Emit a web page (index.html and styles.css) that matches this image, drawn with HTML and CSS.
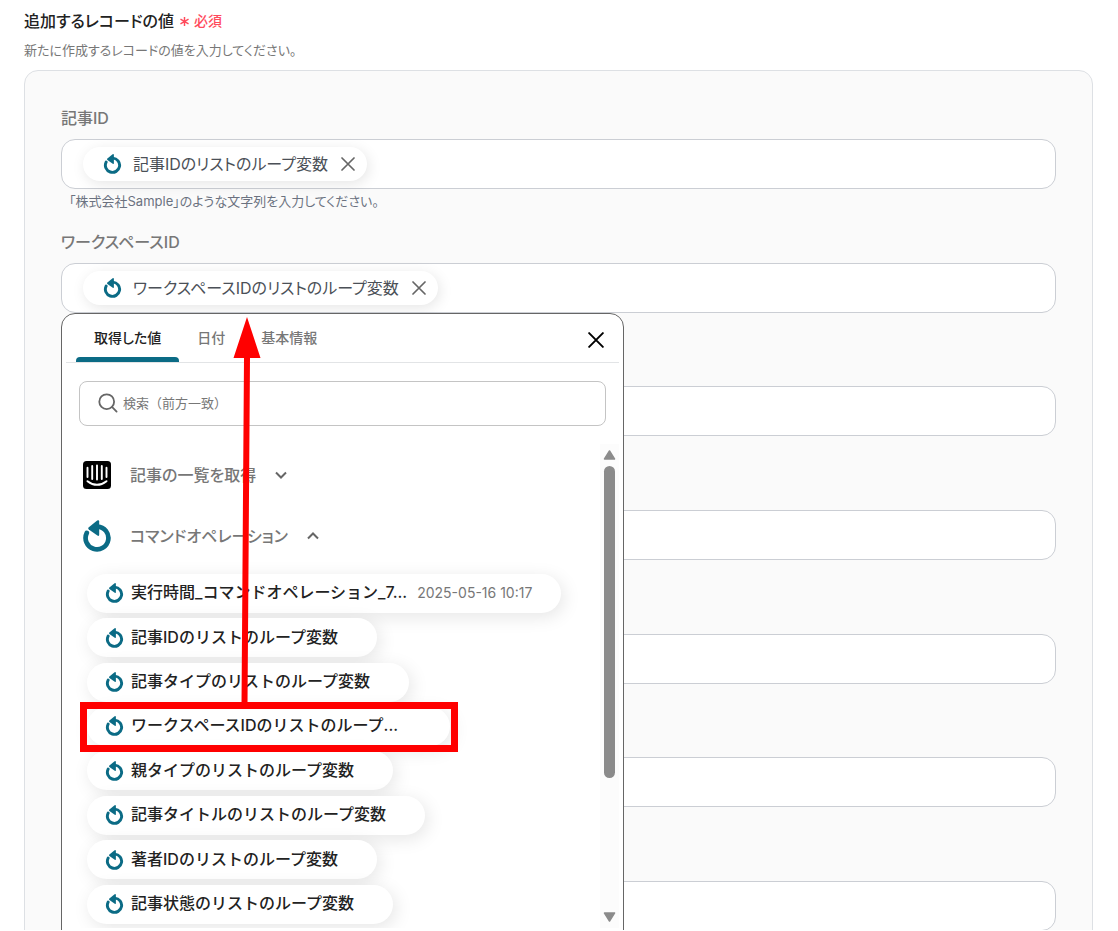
FILE: index.html
```html
<!DOCTYPE html>
<html lang="ja">
<head>
<meta charset="utf-8">
<meta name="viewport" content="width=device-width, initial-scale=1">
<title>追加するレコードの値</title>
<link rel="stylesheet" href="styles.css">
</head>
<body>
<svg class="sprite" aria-hidden="true">
  <symbol id="loop" viewBox="0 0 28 32">
    <path d="M14.500 6.600A11.400 11.400 0 1 1 3.800 12.900" fill="none" stroke="currentColor" stroke-width="4.700" stroke-linecap="round"/>
    <path d="M5.800 7.200L14.200 .4Q16.200 -.3 16.200 1.400V14.600Q16.200 16.600 14.400 15.500L5.800 9.400Q4.600 8.300 5.800 7.200Z" fill="currentColor"/>
  </symbol>
  <symbol id="cross" viewBox="0 0 14 14">
    <path d="M1 1L13 13M13 1L1 13" fill="none" stroke="currentColor" stroke-width="1.700" stroke-linecap="round"/>
  </symbol>
</svg>
<main class="page">
  <header class="heading">
    <h1 class="title">追加するレコードの値</h1>
    <span class="required"><svg class="asterisk" viewBox="0 0 12 12" aria-hidden="true"><path d="M6 1V11M1.600 3.500L10.400 8.500M10.400 3.500L1.600 8.500"/></svg>必須</span>
  </header>
  <p class="lead">新たに作成するレコードの値を入力してください。</p>

  <section class="panel">
    <div class="field">
      <label class="label" for="f1">記事ID</label>
      <div class="box">
        <span class="chip"><svg class="loop"><use href="#loop"/></svg><span>記事IDのリストのループ変数</span><button class="remove" type="button" aria-label="削除"><svg><use href="#cross"/></svg></button></span>
        <input class="entry" id="f1" type="text">
      </div>
      <p class="hint">「株式会社Sample」のような文字列を入力してください。</p>
    </div>
    <div class="field">
      <label class="label" for="f2">ワークスペースID</label>
      <div class="box">
        <span class="chip"><svg class="loop"><use href="#loop"/></svg><span>ワークスペースIDのリストのループ変数</span><button class="remove" type="button" aria-label="削除"><svg><use href="#cross"/></svg></button></span>
        <input class="entry" id="f2" type="text">
      </div>

      <div class="picker">
        <div class="tabs">
          <button class="tab active" type="button">取得した値</button>
          <button class="tab" type="button">日付</button>
          <button class="tab" type="button">基本情報</button>
          <button class="close" type="button" aria-label="閉じる"><svg><use href="#cross"/></svg></button>
        </div>
        <label class="search">
          <svg class="lens" viewBox="0 0 20 20" aria-hidden="true"><circle cx="8.700" cy="8.700" r="7.400"/><path d="M14.200 14.200L18.600 18.600"/></svg>
          <input class="query" type="text" placeholder="検索（前方一致）" aria-label="検索">
        </label>
        <div class="results">
          <div class="groups">
            <button class="group" type="button">
              <svg class="logo" viewBox="0 0 28 28" aria-hidden="true"><rect width="28" height="28" rx="3.500"/><path d="M4.500 6.800V16M9.200 4.900V18M14 4.400V18.500M18.800 4.900V18M23.500 6.800V16M4.500 20.200Q14 27.500 23.500 20.200"/></svg>
              <span>記事の一覧を取得</span>
              <svg class="chevron" viewBox="0 0 12 8" aria-hidden="true"><path d="M1 1.500L6 6.500L11 1.500"/></svg>
            </button>
            <button class="group" type="button">
              <svg class="loop large"><use href="#loop"/></svg>
              <span>コマンドオペレーション</span>
              <svg class="chevron" viewBox="0 0 12 8" aria-hidden="true"><path d="M1 6.500L6 1.500L11 6.500"/></svg>
            </button>
            <div class="values">
              <button class="value" type="button"><svg class="loop"><use href="#loop"/></svg><span class="name">実行時間_コマンドオペレーション_7...</span><span class="date">2025-05-16 10:17</span></button>
              <button class="value" type="button"><svg class="loop"><use href="#loop"/></svg><span class="name">記事IDのリストのループ変数</span><span class="date"></span></button>
              <button class="value" type="button"><svg class="loop"><use href="#loop"/></svg><span class="name">記事タイプのリストのループ変数</span><span class="date"></span></button>
              <button class="value" type="button"><svg class="loop"><use href="#loop"/></svg><span class="name full">ワークスペースIDのリストのループ...</span><span class="date"></span></button>
              <button class="value" type="button"><svg class="loop"><use href="#loop"/></svg><span class="name">親タイプのリストのループ変数</span><span class="date"></span></button>
              <button class="value" type="button"><svg class="loop"><use href="#loop"/></svg><span class="name">記事タイトルのリストのループ変数</span><span class="date"></span></button>
              <button class="value" type="button"><svg class="loop"><use href="#loop"/></svg><span class="name">著者IDのリストのループ変数</span><span class="date"></span></button>
              <button class="value" type="button"><svg class="loop"><use href="#loop"/></svg><span class="name">記事状態のリストのループ変数</span><span class="date"></span></button>
            </div>
          </div>
          <div class="scrollbar" aria-hidden="true">
            <svg class="step" viewBox="0 0 12 10"><path d="M6 1L11 9H1Z"/></svg>
            <div class="track"><div class="thumb"></div></div>
            <svg class="step" viewBox="0 0 12 10"><path d="M6 9L11 1H1Z"/></svg>
          </div>
        </div>
      </div>
    </div>
    <div class="field"><div class="label"></div><div class="box"><input class="entry" type="text" aria-label="値3"></div></div>
    <div class="field"><div class="label"></div><div class="box"><input class="entry" type="text" aria-label="値4"></div></div>
    <div class="field"><div class="label"></div><div class="box"><input class="entry" type="text" aria-label="値5"></div></div>
    <div class="field"><div class="label"></div><div class="box"><input class="entry" type="text" aria-label="値6"></div></div>
    <div class="field"><div class="label"></div><div class="box"><input class="entry" type="text" aria-label="値7"></div></div>
  </section>

  <div class="marker" aria-hidden="true"></div>
  <svg class="arrow" viewBox="0 0 28 388" aria-hidden="true"><path d="M14 0L27.500 41H17L14.500 388H8.500L11 41H.5Z"/></svg>
</main>
</body>
</html>
```
FILE: styles.css
```css
* { box-sizing: border-box; }

body {
  margin: 0;
  padding-bottom: 1px;
  height: 100vh;
  background: #fff;
  color: #222;
  font-family: Inter, "Noto Sans CJK JP", sans-serif;
  font-size: 16px;
  line-height: 24px;
  font-feature-settings: "palt";
}

button, input {
  margin: 0;
  padding: 0;
  border: 0;
  background: none;
  color: inherit;
  font: inherit;
  font-feature-settings: inherit;
}

button { cursor: pointer; }
p, h1 { margin: 0; }
svg { display: block; flex: none; }
.sprite { position: absolute; width: 0; height: 0; }

.page {
  position: relative;
  height: 100%;
  overflow: hidden;
  padding: 9px 25px 0 24px;
}

.heading { display: flex; align-items: center; gap: 5px; }
.title { font-size: 16px; font-weight: 500; }
.required { display: flex; align-items: center; gap: 4px; color: #ff4b5c; font-size: 14px; font-weight: 500; }
.asterisk { width: 11px; height: 11px; fill: none; stroke: currentColor; stroke-width: 1.6; }
.lead { margin-top: 8px; color: #777; font-size: 13px; line-height: 18px; }

.panel {
  display: flex;
  flex-direction: column;
  justify-content: space-between;
  min-height: 918px;
  margin-top: 11px;
  padding: 35px 36px;
  border: 1px solid #dde0e4;
  border-radius: 14px;
  background: #fafafa;
}

.field { position: relative; min-height: 104px; }
.label { display: block; height: 24px; margin-bottom: 9px; color: #777; font-weight: 500; }
.box {
  display: flex;
  align-items: center;
  height: 50px;
  padding: 0 21px;
  border: 1px solid #cbced4;
  border-radius: 14px;
  background: #fff;
}
.entry { flex: 1; min-width: 0; height: 100%; outline: 0; }
.hint { padding: 3px 8px 0; color: #6b7280; font-size: 13px; line-height: 18px; }

.chip {
  display: flex;
  align-items: center;
  height: 34px;
  padding: 0 11px 0 20px;
  border-radius: 17px;
  background: #fff;
  box-shadow: 2px 3px 14px rgba(0, 0, 0, .1);
  color: #4b5057;
  white-space: nowrap;
}
.chip .loop { margin-right: 11px; }
.remove { margin-left: 12px; color: #666; }
.remove svg { width: 16px; height: 14px; }

.loop { width: 19px; height: 20px; color: #0b6b85; }
.loop.large { width: 28px; height: 32px; }

.picker {
  position: absolute;
  z-index: 1;
  top: 83px;
  left: 0;
  width: 563px;
  height: 640px;
  padding: 0 4px;
  border: 1px solid #666;
  border-radius: 14px;
  background: #fff;
}

.tabs {
  display: flex;
  height: 49px;
  padding: 0 14px 0 10px;
  border-bottom: 1px solid #e2e4e6;
  color: #777;
  font-size: 14px;
  font-weight: 500;
}
.tab { padding: 6px 18px 0; border-bottom: 5px solid transparent; }
.tab.active { position: relative; color: #222; }
.tab.active::after {
  content: "";
  position: absolute;
  right: 0;
  bottom: -5px;
  left: 0;
  height: 5px;
  border-radius: 4px 4px 0 0;
  background: #0b6b85;
}
.close { margin-left: auto; padding-top: 4px; color: #000; }
.close svg { width: 18px; height: 16px; }

.search {
  display: flex;
  align-items: center;
  gap: 5px;
  height: 45px;
  margin: 18px 13px;
  padding: 0 18px;
  border: 1px solid #c4c4c4;
  border-radius: 8px;
}
.lens { width: 20px; height: 20px; fill: none; stroke: #666; stroke-width: 1.8; stroke-linecap: round; }
.query { flex: 1; min-width: 0; outline: 0; font-size: 13px; font-feature-settings: normal; }
.query::placeholder { color: #777; opacity: 1; }

.results { display: flex; height: 484px; overflow: hidden; }
.groups { flex: 1; padding-top: 1px; }
.group {
  display: flex;
  align-items: center;
  gap: 19px;
  height: 61px;
  padding-left: 17px;
  color: #777;
  font-weight: 500;
}
.logo { width: 28px; height: 28px; }
.logo path { fill: none; stroke: #fff; stroke-width: 1.9; stroke-linecap: round; }
.chevron { width: 12px; height: 8px; fill: none; stroke: #666; stroke-width: 2; }

.values {
  display: flex;
  flex-direction: column;
  align-items: flex-start;
  justify-content: space-between;
  min-height: 350px;
  margin-top: 7px;
  padding-left: 21px;
  font-feature-settings: normal;
}
.value {
  display: flex;
  align-items: center;
  gap: 7px;
  height: 39px;
  padding: 0 29px 0 18px;
  border-radius: 20px;
  background: #fff;
  box-shadow: 3px 4px 18px rgba(0, 0, 0, .1);
  font-weight: 500;
  white-space: nowrap;
}
.name { padding-bottom: 2px; text-align: left; }
.name.full { min-width: 280px; }
.date { margin-left: 3px; color: #777; font-size: 14px; font-weight: 400; }

.scrollbar {
  display: flex;
  flex-direction: column;
  align-items: center;
  gap: 6px;
  width: 19px;
  padding: 6px 0;
  background: #fcfcfc;
}
.step { width: 13px; height: 10px; fill: #8b8b8b; stroke: #8b8b8b; stroke-width: 1.5; stroke-linejoin: round; }
.track { flex: 1; }
.thumb { width: 11px; height: 312px; border-radius: 6px; background: #8b8b8b; }

.marker {
  position: absolute;
  z-index: 2;
  top: 702px;
  left: 80px;
  width: 378px;
  height: 50px;
  border: 7px solid #f00;
}
.arrow { position: absolute; z-index: 2; top: 317px; left: 233px; width: 28px; height: 388px; fill: #f00; }
```
